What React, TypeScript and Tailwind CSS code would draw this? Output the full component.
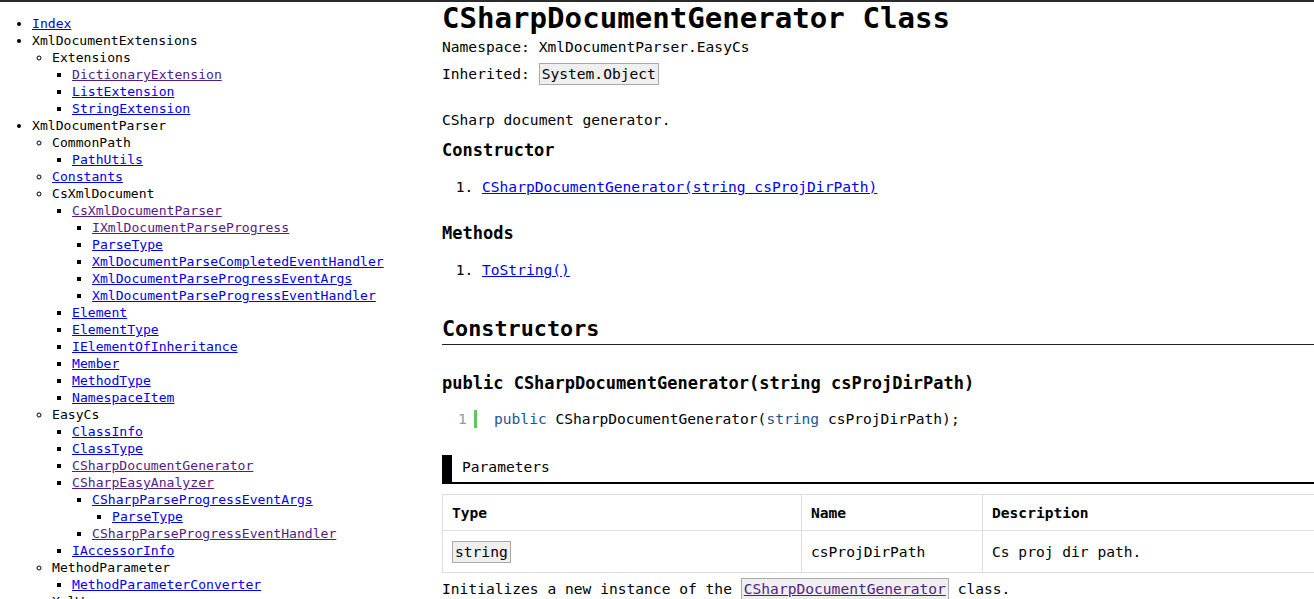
type NavNode = {
  label: string;
  link?: boolean;
  visited?: boolean;
  children?: NavNode[];
};

const NAV: NavNode[] = [
  { label: 'Index', link: true },
  {
    label: 'XmlDocumentExtensions',
    children: [
      {
        label: 'Extensions',
        children: [
          { label: 'DictionaryExtension', link: true, visited: true },
          { label: 'ListExtension', link: true },
          { label: 'StringExtension', link: true },
        ],
      },
    ],
  },
  {
    label: 'XmlDocumentParser',
    children: [
      { label: 'CommonPath', children: [{ label: 'PathUtils', link: true }] },
      { label: 'Constants', link: true },
      {
        label: 'CsXmlDocument',
        children: [
          {
            label: 'CsXmlDocumentParser',
            link: true,
            visited: true,
            children: [
              { label: 'IXmlDocumentParseProgress', link: true, visited: true },
              { label: 'ParseType', link: true },
              { label: 'XmlDocumentParseCompletedEventHandler', link: true },
              { label: 'XmlDocumentParseProgressEventArgs', link: true },
              { label: 'XmlDocumentParseProgressEventHandler', link: true },
            ],
          },
          { label: 'Element', link: true },
          { label: 'ElementType', link: true },
          { label: 'IElementOfInheritance', link: true },
          { label: 'Member', link: true },
          { label: 'MethodType', link: true },
          { label: 'NamespaceItem', link: true },
        ],
      },
      {
        label: 'EasyCs',
        children: [
          { label: 'ClassInfo', link: true },
          { label: 'ClassType', link: true },
          { label: 'CSharpDocumentGenerator', link: true, visited: true },
          {
            label: 'CSharpEasyAnalyzer',
            link: true,
            visited: true,
            children: [
              {
                label: 'CSharpParseProgressEventArgs',
                link: true,
                children: [{ label: 'ParseType', link: true }],
              },
              { label: 'CSharpParseProgressEventHandler', link: true, visited: true },
            ],
          },
          { label: 'IAccessorInfo', link: true },
        ],
      },
      {
        label: 'MethodParameter',
        children: [{ label: 'MethodParameterConverter', link: true }],
      },
      { label: 'XmlWrapper' },
    ],
  },
];

const LIST_STYLES = ['list-disc', 'list-[circle]', 'list-[square]'];

function NavList({ nodes, depth }: { nodes: NavNode[]; depth: number }) {
  const style = LIST_STYLES[Math.min(depth, 2)];
  return (
    <ul className={`${style} ${depth === 0 ? 'pl-[32px]' : 'pl-[20px]'}`}>
      {nodes.map((node, i) => (
        <li key={i}>
          {node.link ? (
            <a
              href="#"
              className={`underline ${node.visited ? 'text-[#551a8b]' : 'text-[#0000ee]'}`}
            >
              {node.label}
            </a>
          ) : (
            <span>{node.label}</span>
          )}
          {node.children && <NavList nodes={node.children} depth={depth + 1} />}
        </li>
      ))}
    </ul>
  );
}

function Code({ children }: { children: React.ReactNode }) {
  return (
    <span className="inline-block leading-[20px] px-[2px] bg-[#efefef] border border-[#aaaaaa]">
      {children}
    </span>
  );
}

export default function App() {
  return (
    <div className="h-[599px] overflow-hidden bg-white text-black font-['DejaVu_Sans_Mono',monospace]">
      <div className="h-[2px] bg-[#2b2b2b]" />
      <div className="flex">
        <nav className="w-[442px] shrink-0 pt-[13px] text-[13.1px] leading-[17px]">
          <NavList nodes={NAV} depth={0} />
        </nav>

        <main className="flex-1 min-w-0 overflow-hidden text-[14.6px] leading-[24px]">
          <h1 className="text-[29.1px] leading-[32px] font-bold">CSharpDocumentGenerator Class</h1>
          <p className="mt-[1px]">Namespace: XmlDocumentParser.EasyCs</p>
          <p className="mt-[3px]">
            Inherited: <Code>System.Object</Code>
          </p>

          <p className="mt-[22px]">CSharp document generator.</p>

          <h3 className="mt-[6px] text-[17px] font-bold">Constructor</h3>
          <ol className="list-decimal pl-[40px] mt-[13px]">
            <li>
              <a href="#" className="underline text-[#0000ee]">
                CSharpDocumentGenerator(string csProjDirPath)
              </a>
            </li>
          </ol>

          <h3 className="mt-[22px] text-[17px] font-bold">Methods</h3>
          <ol className="list-decimal pl-[40px] mt-[13px]">
            <li>
              <a href="#" className="underline text-[#0000ee]">
                ToString()
              </a>
            </li>
          </ol>

          <h2 className="mt-[32px] text-[21.8px] leading-[30px] font-bold border-b border-[#222]">
            Constructors
          </h2>

          <h3 className="mt-[26px] text-[17px] font-bold">
            public CSharpDocumentGenerator(string csProjDirPath)
          </h3>

          <div className="mt-[12px] flex items-center pl-[16px]">
            <span className="w-[8px] text-[#999999]">1</span>
            <span className="ml-[8px] w-[3px] h-[18px] bg-[#5cc85c]" />
            <span className="ml-[17px] whitespace-pre">
              <span className="text-[#1a5592] font-medium">public</span> CSharpDocumentGenerator(
              <span className="text-[#1a5592] font-medium">string</span> csProjDirPath);
            </span>
          </div>

          <div className="mt-[24px] border-l-[10px] border-b-2 border-black pl-[10px] pb-[3px]">
            Parameters
          </div>

          <table className="mt-[10px] table-fixed border-collapse w-[calc(100%+2px)]">
            <colgroup>
              <col className="w-[359px]" />
              <col className="w-[181px]" />
              <col />
            </colgroup>
            <thead>
              <tr className="h-[36px]">
                <th className="border border-[#dddddd] px-[9px] text-left font-bold align-middle">Type</th>
                <th className="border border-[#dddddd] px-[9px] text-left font-bold align-middle">Name</th>
                <th className="border border-[#dddddd] px-[9px] text-left font-bold align-middle">
                  Description
                </th>
              </tr>
            </thead>
            <tbody>
              <tr className="h-[42px]">
                <td className="border border-[#dddddd] px-[9px] align-middle">
                  <Code>string</Code>
                </td>
                <td className="border border-[#dddddd] px-[9px] align-middle">csProjDirPath</td>
                <td className="border border-[#dddddd] px-[9px] align-middle">Cs proj dir path.</td>
              </tr>
            </tbody>
          </table>

          <p className="mt-[4px] whitespace-pre">
            Initializes a new instance of the{' '}
            <Code>
              <a href="#" className="underline text-[#551a8b]">
                CSharpDocumentGenerator
              </a>
            </Code>{' '}
            class.
          </p>
        </main>
      </div>
    </div>
  );
}
